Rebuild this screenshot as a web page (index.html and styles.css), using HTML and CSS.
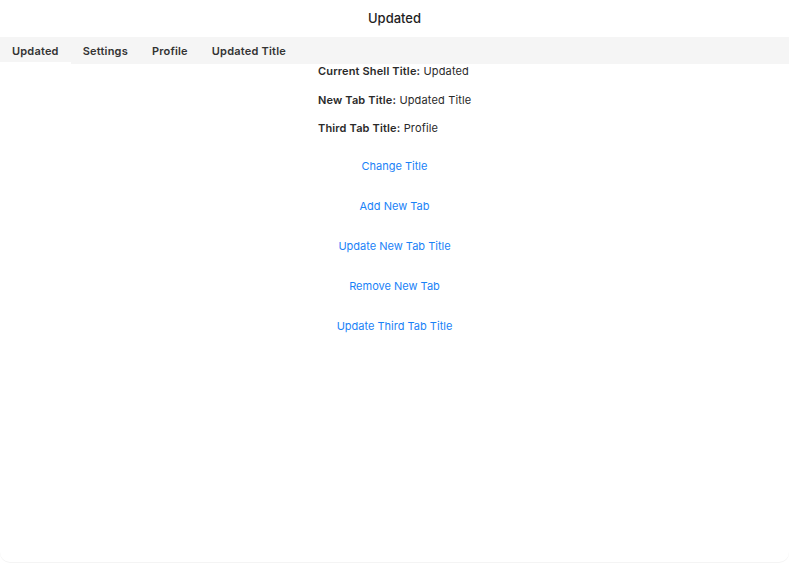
FILE: index.html
```html
<!DOCTYPE html>
<html>
<head>
<meta charset="utf-8">
<link rel="stylesheet" href="styles.css">
</head>
<body>
<div class="window">
  <header class="titlebar">Updated</header>
  <nav class="tabbar">
    <div class="tab active">Updated</div>
    <div class="tab">Settings</div>
    <div class="tab">Profile</div>
    <div class="tab">Updated Title</div>
  </nav>
  <main class="content">
    <div class="info">
      <p class="line"><b>Current Shell Title:</b> Updated</p>
      <p class="line"><b>New Tab Title:</b> Updated Title</p>
      <p class="line"><b>Third Tab Title:</b> Profile</p>
    </div>
    <div class="buttons">
      <button class="link">Change Title</button>
      <button class="link">Add New Tab</button>
      <button class="link">Update New Tab Title</button>
      <button class="link">Remove New Tab</button>
      <button class="link">Update Third Tab Title</button>
    </div>
  </main>
</div>
</body>
</html>
```
FILE: styles.css
```css
html, body {
  margin: 0;
  padding: 0;
  background: #ffffff;
}
body {
  font-family: Inter, "Noto Sans", "Liberation Sans", sans-serif;
  color: #222;
}
.window {
  box-sizing: border-box;
  width: 789px;
  height: 563px;
  border-radius: 0 0 10px 10px;
  box-shadow: inset 0 -1px 0 #f4f4f4;
  background: #fff;
  overflow: hidden;
}
.titlebar {
  height: 37px;
  padding-bottom: 2px;
  box-sizing: border-box;
  display: flex;
  align-items: center;
  justify-content: center;
  font-size: 13px;
  font-weight: 500;
  color: #1e1e1e;
}
.tabbar {
  height: 27px;
  background: #f5f5f5;
  display: flex;
  align-items: stretch;
}
.tab {
  display: flex;
  align-items: center;
  padding: 0 12px 0 12px;
  font-size: 11px;
  font-weight: 600;
  color: #333;
  letter-spacing: 0.2px;
}
.tab.active {
  box-shadow: inset 0 -2px 0 #ffffff;
}
.content {
  display: flex;
  flex-direction: column;
  align-items: center;
}
.info {
  display: flex;
  flex-direction: column;
  align-self: flex-start;
  margin-left: 318px;
  gap: 14.5px;
  padding-top: 0;
}
.line {
  margin: 0;
  font-size: 11px;
  line-height: 14px;
  color: #2a2a2a;
  letter-spacing: 0.15px;
}
.line b {
  font-weight: 600;
}
.buttons {
  display: flex;
  flex-direction: column;
  align-items: center;
  margin-top: 24px;
  gap: 26px;
}
.link {
  border: none;
  background: none;
  padding: 0;
  font-family: inherit;
  font-size: 11px;
  line-height: 14px;
  color: #1a82f7;
  cursor: pointer;
}
```
